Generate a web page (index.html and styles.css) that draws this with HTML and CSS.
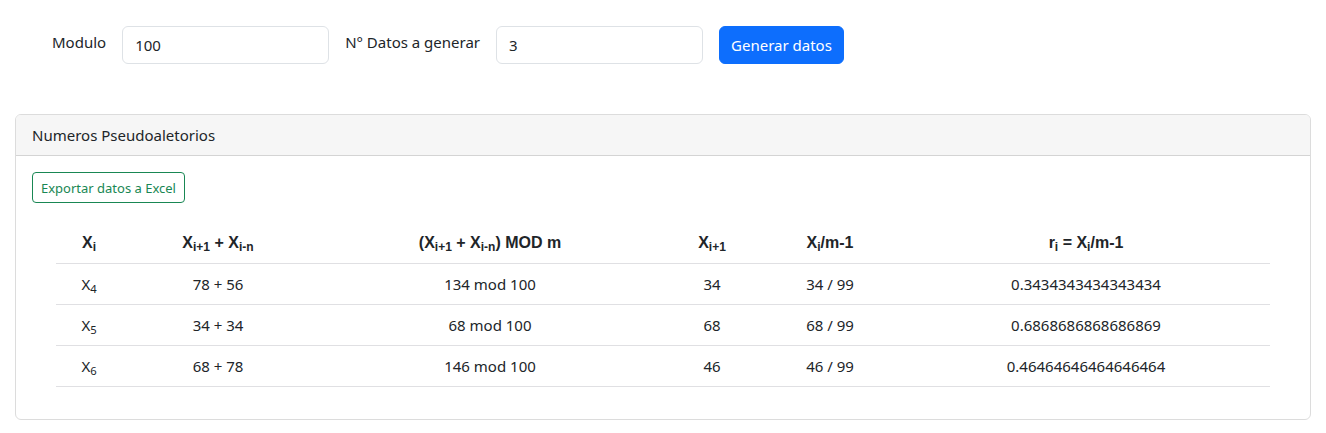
FILE: index.html
```html
<!DOCTYPE html>
<html lang="es">
<head>
<meta charset="utf-8">
<title>Numeros Pseudoaletorios</title>
<link rel="stylesheet" href="styles.css">
</head>
<body>
<div class="page">
  <form class="gen-form">
    <label class="gen-label" for="modulo">Modulo</label>
    <input class="gen-input" id="modulo" type="text" value="100">
    <label class="gen-label" for="ndatos">N° Datos a generar</label>
    <input class="gen-input" id="ndatos" type="text" value="3">
    <button class="btn-primary" type="button">Generar datos</button>
  </form>

  <section class="card">
    <div class="card-header">Numeros Pseudoaletorios</div>
    <div class="card-body">
      <button class="btn-export" type="button">Exportar datos a Excel</button>
      <table class="data-table">
        <colgroup>
          <col class="c1"><col class="c2"><col class="c3"><col class="c4"><col class="c5"><col class="c6">
        </colgroup>
        <thead>
          <tr>
            <th>X<sub>i</sub></th>
            <th>X<sub>i+1</sub> + X<sub>i-n</sub></th>
            <th>(X<sub>i+1</sub> + X<sub>i-n</sub>) MOD m</th>
            <th>X<sub>i+1</sub></th>
            <th>X<sub>i</sub>/m-1</th>
            <th>r<sub>i</sub> = X<sub>i</sub>/m-1</th>
          </tr>
        </thead>
        <tbody>
          <tr>
            <td>X<sub>4</sub></td><td>78 + 56</td><td>134 mod 100</td><td>34</td><td>34 / 99</td><td>0.3434343434343434</td>
          </tr>
          <tr>
            <td>X<sub>5</sub></td><td>34 + 34</td><td>68 mod 100</td><td>68</td><td>68 / 99</td><td>0.6868686868686869</td>
          </tr>
          <tr>
            <td>X<sub>6</sub></td><td>68 + 78</td><td>146 mod 100</td><td>46</td><td>46 / 99</td><td>0.46464646464646464</td>
          </tr>
        </tbody>
      </table>
    </div>
  </section>
</div>
</body>
</html>
```

FILE: styles.css
```css
* { box-sizing: border-box; }

body {
  margin: 0;
  font-family: "Noto Sans", "Open Sans", sans-serif;
  font-size: 15px;
  line-height: 24px;
  color: #212529;
  background: #fff;
}

.page {
  padding: 26px 15px 0;
}

.gen-form {
  display: flex;
  align-items: flex-start;
  gap: 16px;
  padding-left: 37px;
  margin: 0 0 50px;
}

.gen-label {
  padding-top: 4px;
  font-size: 15px;
  line-height: 24px;
  color: #212529;
}

.gen-input {
  width: 207px;
  height: 38px;
  padding: 6px 12px;
  border: 1px solid #dee2e6;
  border-radius: 6px;
  font-family: "Noto Sans", "Open Sans", sans-serif;
  font-size: 15px;
  line-height: 24px;
  color: #212529;
  background: #fff;
  outline: none;
}

.btn-primary {
  height: 38px;
  padding: 6px 11px;
  border: 1px solid #0d6efd;
  border-radius: 6px;
  background: #0d6efd;
  color: #fff;
  font-family: "Noto Sans", "Open Sans", sans-serif;
  font-size: 15px;
  line-height: 24px;
  cursor: pointer;
}

.card {
  border: 1px solid #dcdcdc;
  border-radius: 6px;
  background: #fff;
  overflow: hidden;
}

.card-header {
  padding: 8px 16px;
  background: #f6f6f6;
  border-bottom: 1px solid #d4d4d4;
  line-height: 24px;
}

.card-body {
  padding: 16px;
}

.btn-export {
  display: block;
  height: 31px;
  padding: 3px 8px;
  border: 1px solid #198754;
  border-radius: 4px;
  background: #fff;
  color: #198754;
  font-family: "Noto Sans", "Open Sans", sans-serif;
  font-size: 13px;
  line-height: 22px;
  cursor: pointer;
}

.data-table {
  width: calc(100% - 48px);
  margin: 20px 24px 16px;
  border-collapse: collapse;
  table-layout: fixed;
}

.data-table .c1 { width: 66px; }
.data-table .c2 { width: 192px; }
.data-table .c3 { width: 352px; }
.data-table .c4 { width: 92px; }
.data-table .c5 { width: 144px; }
.data-table .c6 { width: auto; }

.data-table th,
.data-table td {
  padding: 8px;
  text-align: center;
  line-height: 24px;
  border-bottom: 1px solid #e0e0e3;
  white-space: nowrap;
}

.data-table th {
  font-family: "Liberation Sans", Arial, sans-serif;
  font-weight: bold;
  font-size: 16px;
  color: #212529;
}

sub {
  position: relative;
  font-size: 0.75em;
  line-height: 0;
  vertical-align: baseline;
  bottom: -0.25em;
}
```
